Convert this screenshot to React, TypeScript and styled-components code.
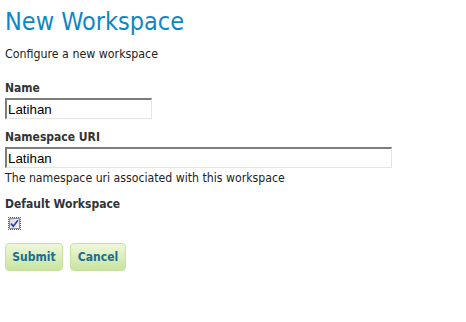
import React from "react";
import styled, { createGlobalStyle } from "styled-components";

const GlobalStyle = createGlobalStyle`
  html, body {
    margin: 0;
    padding: 0;
    background: #ffffff;
  }
  body {
    font-family: "DejaVu Sans Condensed", "DejaVu Sans", sans-serif;
    font-size: 12px;
    color: #222222;
  }
`;

const Page = styled.div`
  padding: 0 5px;
`;

const Title = styled.h1`
  margin: 0;
  padding-top: 5px;
  font-family: "DejaVu Sans Condensed", "DejaVu Sans", sans-serif;
  font-weight: normal;
  font-size: 25px;
  line-height: 33px;
  color: #0d87c5;
`;

const Intro = styled.p`
  margin: 9px 0 0 0;
  font-size: 12.3px;
  line-height: 15px;
`;

const Form = styled.form`
  display: flex;
  flex-direction: column;
  margin-top: 19px;
`;

const Field = styled.div`
  display: flex;
  flex-direction: column;
  align-items: flex-start;
  margin-bottom: 11px;
`;

const Label = styled.label`
  font-weight: bold;
  line-height: 15px;
  color: #333333;
  margin-bottom: 2px;
`;

const TextInput = styled.input<{ $width: number }>`
  box-sizing: border-box;
  width: ${(p) => p.$width}px;
  height: 21px;
  margin: 0;
  padding: 0 0 0 1px;
  font-family: "Liberation Sans", Arial, sans-serif;
  font-size: 13.33px;
  color: #000000;
  background: #ffffff;
  border-top: 2px solid #7c7c7c;
  border-left: 2px solid #7c7c7c;
  border-right: 1px solid #e4e4e4;
  border-bottom: 1px solid #e4e4e4;
  outline: none;
`;

const Help = styled.span`
  margin-top: 3px;
  font-size: 12.2px;
  line-height: 15px;
`;

const CheckFocus = styled.span`
  display: inline-flex;
  margin: 3px 0 0 3px;
  padding: 1px;
  outline: 1px dotted #555555;
  outline-offset: -1px;
`;

const CheckBox = styled.span`
  display: inline-flex;
  align-items: center;
  justify-content: center;
  box-sizing: border-box;
  width: 11px;
  height: 11px;
  border: 1px solid #8a8f9c;
  background: linear-gradient(135deg, #d8dae0 0%, #f4f5f8 100%);
`;

const Buttons = styled.div`
  display: flex;
  gap: 7px;
  margin-top: 2px;
`;

const Button = styled.button<{ $width: number }>`
  box-sizing: border-box;
  width: ${(p) => p.$width}px;
  height: 28px;
  padding: 0;
  font-family: "DejaVu Sans Condensed", "DejaVu Sans", sans-serif;
  font-size: 12px;
  font-weight: bold;
  color: #196d93;
  border: 1px solid #c6e29c;
  border-radius: 4px;
  background: linear-gradient(to bottom, #eef7dc 0%, #d9edb8 55%, #c8e3a0 100%);
  cursor: pointer;
`;

export default function App() {
  return (
    <Page>
      <GlobalStyle />
      <Title>New Workspace</Title>
      <Intro>Configure a new workspace</Intro>
      <Form onSubmit={(e) => e.preventDefault()}>
        <Field>
          <Label>Name</Label>
          <TextInput $width={147} defaultValue="Latihan" />
        </Field>
        <Field>
          <Label>Namespace URI</Label>
          <TextInput $width={387} defaultValue="Latihan" />
          <Help>The namespace uri associated with this workspace</Help>
        </Field>
        <Field>
          <Label>Default Workspace</Label>
          <CheckFocus>
            <CheckBox>
              <svg width="9" height="9" viewBox="0 0 9 9">
                <path
                  d="M1 4.6 L3.3 7.2 L8 1.2"
                  fill="none"
                  stroke="#2a3f9a"
                  strokeWidth="1.6"
                />
              </svg>
            </CheckBox>
          </CheckFocus>
        </Field>
        <Buttons>
          <Button type="submit" $width={58}>
            Submit
          </Button>
          <Button type="button" $width={56}>
            Cancel
          </Button>
        </Buttons>
      </Form>
    </Page>
  );
}
